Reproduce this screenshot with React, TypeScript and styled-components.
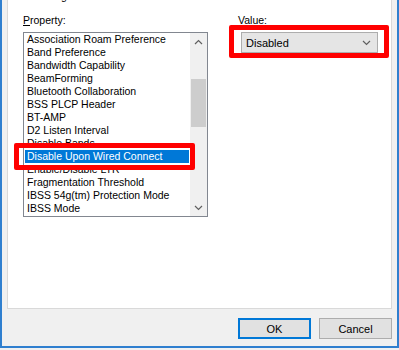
import React from "react";
import styled, { createGlobalStyle } from "styled-components";

const Global = createGlobalStyle`
  html, body { margin: 0; padding: 0; background: #f0f0f0; }
  body { font-family: "Liberation Sans", Arial, sans-serif; font-size: 10.5px; color: #000; }
  * { box-sizing: border-box; }
`;

const Window = styled.div`
  width: 399px;
  height: 348px;
  background: #f0f0f0;
  border-left: 2px solid #2f7fcf;
  border-right: 2px solid #2f7fcf;
  border-bottom: 2px solid #2f7fcf;
  box-shadow: 0 2px 0 #ecebd8;
  display: flex;
  flex-direction: column;
  padding: 0 5px 0 5px;
  overflow: hidden;
  position: relative;
`;

const Panel = styled.div`
  height: 309px;
  flex-shrink: 0;
  background: #fff;
  border: 1px solid #d9d9d9;
  border-top: none;
  position: relative;
  padding: 0 0 0 15px;
`;

const Intro = styled.div`
  margin-top: -10px;
  height: 11px;
  line-height: 13px;
`;

const Columns = styled.div`
  display: flex;
  margin-top: 13px;
`;

const Left = styled.div`
  display: flex;
  flex-direction: column;
  width: 185px;
`;

const Right = styled.div`
  display: flex;
  flex-direction: column;
  margin-left: 30px;
`;

const Label = styled.div`
  height: 13px;
  line-height: 13px;
  margin-bottom: 5px;
`;

const U = styled.span`
  text-decoration: underline;
`;

const ListBox = styled.div`
  width: 185px;
  height: 185px;
  border: 1px solid #828790;
  display: flex;
  background: #fff;
`;

const Items = styled.div`
  flex: 1;
  padding: 0 1px;
`;

const Item = styled.div<{ $sel?: boolean }>`
  height: 13px;
  line-height: 13px;
  padding-left: 2px;
  white-space: nowrap;
  background: ${(p) => (p.$sel ? "#0078d7" : "transparent")};
  color: ${(p) => (p.$sel ? "#fff" : "#000")};
`;

const ScrollBar = styled.div`
  width: 17px;
  background: #f0f0f0;
  display: flex;
  flex-direction: column;
  align-items: center;
`;

const Arrow = styled.div`
  height: 17px;
  width: 17px;
  display: flex;
  align-items: center;
  justify-content: center;
`;

const Track = styled.div`
  flex: 1;
  width: 100%;
  padding: 29px 1px 0 1px;
`;

const Thumb = styled.div`
  height: 48px;
  background: #cdcdcd;
`;

const Combo = styled.div`
  width: 137px;
  height: 21px;
  background: #e5e5e5;
  border: 1px solid #adadad;
  display: flex;
  align-items: center;
  justify-content: space-between;
  padding: 0 6px 0 4px;
  margin-left: 3px;
  font-size: 11px;
`;

const Highlight = styled.div<{ $l: number; $t: number; $w: number; $h: number }>`
  position: absolute;
  left: ${(p) => p.$l}px;
  top: ${(p) => p.$t}px;
  width: ${(p) => p.$w}px;
  height: ${(p) => p.$h}px;
  border: 5px solid #f00;
  border-radius: 2px;
  pointer-events: none;
`;

const Buttons = styled.div`
  display: flex;
  justify-content: flex-end;
  gap: 8px;
  padding-top: 9px;
`;

const Button = styled.div<{ $default?: boolean }>`
  width: 73px;
  height: 21px;
  background: #e1e1e1;
  border: ${(p) => (p.$default ? "2px solid #0078d7" : "1px solid #adadad")};
  display: flex;
  align-items: center;
  justify-content: center;
  font-size: 11px;
`;

const Chevron = ({ up }: { up?: boolean }) => (
  <svg width="9" height="6" viewBox="0 0 9 6">
    <polyline
      points={up ? "1,5 4.5,1.5 8,5" : "1,1 4.5,4.5 8,1"}
      fill="none"
      stroke="#606060"
      strokeWidth="1.2"
    />
  </svg>
);

const items = [
  "Association Roam Preference",
  "Band Preference",
  "Bandwidth Capability",
  "BeamForming",
  "Bluetooth Collaboration",
  "BSS PLCP Header",
  "BT-AMP",
  "D2 Listen Interval",
  "Disable Bands",
  "Disable Upon Wired Connect",
  "Enable/Disable LTR",
  "Fragmentation Threshold",
  "IBSS 54g(tm) Protection Mode",
  "IBSS Mode",
];

export default function App() {
  return (
    <>
      <Global />
      <Window>
        <Panel>
          <Intro>on the right.</Intro>
          <Columns>
            <Left>
              <Label>
                <U>P</U>roperty:
              </Label>
              <ListBox>
                <Items>
                  {items.map((t) => (
                    <Item key={t} $sel={t === "Disable Upon Wired Connect"}>
                      {t}
                    </Item>
                  ))}
                </Items>
                <ScrollBar>
                  <Arrow>
                    <Chevron up />
                  </Arrow>
                  <Track>
                    <Thumb />
                  </Track>
                  <Arrow>
                    <Chevron />
                  </Arrow>
                </ScrollBar>
              </ListBox>
            </Left>
            <Right>
              <Label>Value:</Label>
              <Combo>
                <span>Disabled</span>
                <Chevron />
              </Combo>
            </Right>
          </Columns>
          <Highlight $l={6} $t={143} $w={181} $h={27} />
          <Highlight $l={221} $t={25} $w={160} $h={33} />
        </Panel>
        <Buttons>
          <Button $default>OK</Button>
          <Button>Cancel</Button>
        </Buttons>
      </Window>
    </>
  );
}
